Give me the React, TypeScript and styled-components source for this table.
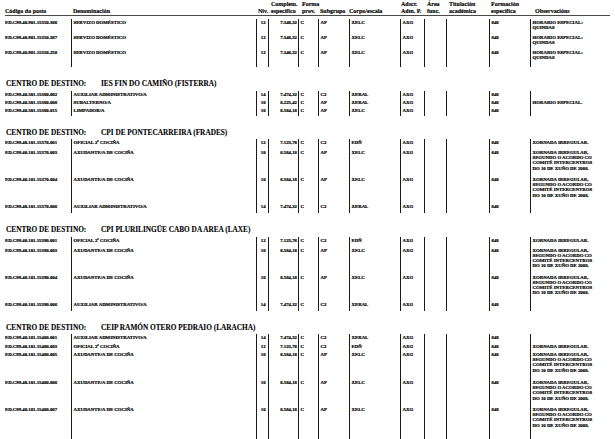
import React from "react";
import styled, { createGlobalStyle } from "styled-components";

const Global = createGlobalStyle`
  html, body { margin: 0; padding: 0; background: #ffffff; }
  body { font-family: "Liberation Serif", "Times New Roman", serif; color: #000; }
`;

const COLS = "66px 185px 12px 30px 20px 31px 51px 24px 22px 43px 41px 80px";

const Page = styled.div`
  width: 615px;
  box-sizing: border-box;
  padding: 1px 5px 0 5px;
  overflow: hidden;
  height: 439px;
`;

const HeaderRow = styled.div`
  display: grid;
  grid-template-columns: ${COLS};
  align-items: end;
  height: 14px;
  border-bottom: 1px solid #4a4a4a;
  font-size: 6px;
  line-height: 7px;
  font-weight: bold;
  -webkit-text-stroke: 0.15px #000;
`;

const HeadCell = styled.div<{ $pad?: number }>`
  padding-left: ${(p) => p.$pad ?? 0}px;
  white-space: nowrap;
`;

const Section = styled.section<{ $first?: boolean }>`
  margin-top: ${(p) => (p.$first ? 2.5 : 13)}px;
`;

const Heading = styled.h2`
  margin: 0 0 2.5px 0;
  padding-left: 1px;
  height: 8px;
  font-size: 7.3px;
  line-height: 8px;
  font-weight: bold;
  white-space: nowrap;
  -webkit-text-stroke: 0.1px #000;
`;

const HeadingLabel = styled.span`
  display: inline-block;
  width: 95px;
`;

const Row = styled.div<{ $h: number }>`
  display: grid;
  grid-template-columns: ${COLS};
  height: ${(p) => p.$h}px;
  font-size: 4.8px;
  line-height: 5.2px;
  font-weight: bold;
  -webkit-text-stroke: 0.2px #000;
`;

const Cell = styled.div<{ $align?: "left" | "right" | "center"; $noLine?: boolean }>`
  border-left: ${(p) => (p.$noLine ? "none" : "1px solid #1a1a1a")};
  padding: 1px ${(p) => (p.$align === "right" ? 1 : 0)}px 0 ${(p) => (p.$noLine ? 0 : 1.5)}px;
  text-align: ${(p) => p.$align ?? "left"};
  white-space: nowrap;
  overflow: hidden;
`;

type Rec = {
  code: string;
  den: string;
  niv: string;
  comp: string;
  sub: string;
  corpo: string;
  obs: string[];
  h: number;
};

const HOR = ["HORARIO ESPECIAL:", "QUINDAS"];
const XOR = [
  "XORNADA IRREGULAR,",
  "SEGUNDO O ACORDO CO",
  "COMITÉ INTERCENTROS",
  "DO 10 DE XUÑO DE 2008.",
];

const sdom = (code: string, h: number): Rec => ({
  code,
  den: "SERVIZO DOMÉSTICO",
  niv: "12",
  comp: "7.346,32",
  sub: "AP",
  corpo: "XELC",
  obs: HOR,
  h,
});
const aux = (code: string, h: number): Rec => ({
  code,
  den: "AUXILIAR ADMINISTRATIVO/A",
  niv: "14",
  comp: "7.474,32",
  sub: "C2",
  corpo: "XERAL",
  obs: [],
  h,
});
const ofi = (code: string, h: number): Rec => ({
  code,
  den: "OFICIAL 2ª COCIÑA",
  niv: "12",
  comp: "7.123,76",
  sub: "C2",
  corpo: "EDÑ",
  obs: ["XORNADA IRREGULAR."],
  h,
});
const axu = (code: string, h: number): Rec => ({
  code,
  den: "AXUDANTE/A DE COCIÑA",
  niv: "10",
  comp: "6.584,18",
  sub: "AP",
  corpo: "XELC",
  obs: XOR,
  h,
});

const sections: { name?: string; rows: Rec[] }[] = [
  {
    rows: [
      sdom("ED.C99.40.901.15350.366", 15),
      sdom("ED.C99.40.901.15350.367", 15),
      sdom("ED.C99.40.901.15350.250", 18.5),
    ],
  },
  {
    name: "IES FIN DO CAMIÑO (FISTERRA)",
    rows: [
      aux("ED.C99.40.301.15360.002", 8),
      {
        code: "ED.C99.40.301.15360.008",
        den: "SUBALTERNO/A",
        niv: "10",
        comp: "8.225,42",
        sub: "AP",
        corpo: "XERAL",
        obs: ["HORARIO ESPECIAL."],
        h: 8,
      },
      {
        code: "ED.C99.40.301.15360.015",
        den: "LIMPADOR/A",
        niv: "10",
        comp: "6.584,18",
        sub: "AP",
        corpo: "XELC",
        obs: [],
        h: 9,
      },
    ],
  },
  {
    name: "CPI DE PONTECARREIRA (FRADES)",
    rows: [
      ofi("ED.C99.40.101.15370.001", 10),
      axu("ED.C99.40.101.15370.003", 27),
      axu("ED.C99.40.101.15370.004", 27),
      aux("ED.C99.40.101.15370.006", 10),
    ],
  },
  {
    name: "CPI PLURILINGÜE CABO DA AREA (LAXE)",
    rows: [
      ofi("ED.C99.40.101.15390.001", 10),
      axu("ED.C99.40.101.15390.003", 27),
      axu("ED.C99.40.101.15390.004", 27),
      aux("ED.C99.40.101.15390.006", 10),
    ],
  },
  {
    name: "CEIP RAMÓN OTERO PEDRAIO (LARACHA)",
    rows: [
      aux("ED.C99.40.101.15400.001", 8.5),
      ofi("ED.C99.40.101.15400.003", 8.5),
      axu("ED.C99.40.101.15400.005", 28),
      axu("ED.C99.40.101.15400.006", 27),
      axu("ED.C99.40.101.15400.007", 40),
    ],
  },
];

const DataRow: React.FC<{ r: Rec }> = ({ r }) => (
  <Row $h={r.h}>
    <Cell $noLine>{r.code}</Cell>
    <Cell>{r.den}</Cell>
    <Cell $align="center">{r.niv}</Cell>
    <Cell $align="right">{r.comp}</Cell>
    <Cell>C</Cell>
    <Cell>{r.sub}</Cell>
    <Cell>{r.corpo}</Cell>
    <Cell>AXG</Cell>
    <Cell />
    <Cell />
    <Cell>648</Cell>
    <Cell>
      {r.obs.map((l, i) => (
        <div key={i}>{l}</div>
      ))}
    </Cell>
  </Row>
);

export default function App() {
  return (
    <>
      <Global />
      <Page>
        <HeaderRow>
          <HeadCell>Código do posto</HeadCell>
          <HeadCell $pad={2}>Denominación</HeadCell>
          <HeadCell $pad={2}>Niv.</HeadCell>
          <HeadCell $pad={3}>
            Complem.
            <br />
            específico
          </HeadCell>
          <HeadCell $pad={4}>
            Forma
            <br />
            prov.
          </HeadCell>
          <HeadCell $pad={2}>Subgrupo</HeadCell>
          <HeadCell $pad={0}>Corpo/escala</HeadCell>
          <HeadCell $pad={1}>
            Adscr.
            <br />
            Adm. P.
          </HeadCell>
          <HeadCell $pad={3}>
            Área
            <br />
            func.
          </HeadCell>
          <HeadCell $pad={3}>
            Titulación
            <br />
            académica
          </HeadCell>
          <HeadCell $pad={2}>
            Formación
            <br />
            específica
          </HeadCell>
          <HeadCell $pad={5}>Observacións</HeadCell>
        </HeaderRow>
        {sections.map((s, i) => (
          <Section key={i} $first={i === 0}>
            {s.name && (
              <Heading>
                <HeadingLabel>CENTRO DE DESTINO:</HeadingLabel>
                {s.name}
              </Heading>
            )}
            {s.rows.map((r) => (
              <DataRow key={r.code} r={r} />
            ))}
          </Section>
        ))}
      </Page>
    </>
  );
}
